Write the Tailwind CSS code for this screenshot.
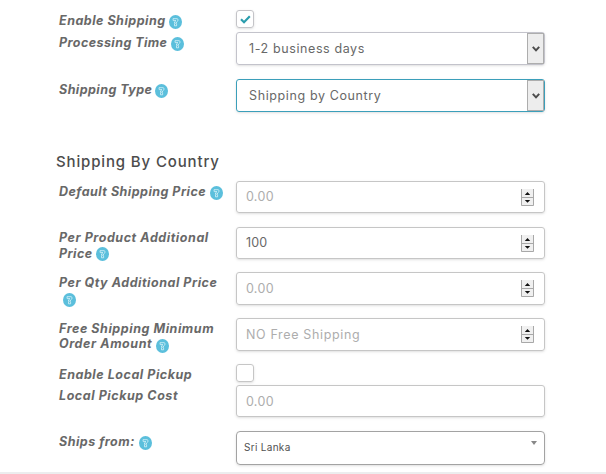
<!DOCTYPE html>
<html lang="en">
<head>
    <meta charset="UTF-8">
    <meta name="viewport" content="width=device-width, initial-scale=1.0">
    <title>Shipping</title>
    <script src="https://cdn.jsdelivr.net/npm/@tailwindcss/browser@4"></script>
</head>
<body class="bg-white font-['Inter',sans-serif] text-[12.5px] text-[#686868] overflow-hidden">
    <svg class="hidden">
        <symbol id="help" viewBox="0 0 13 14">
            <ellipse cx="6.5" cy="7" rx="6.5" ry="7" fill="#5bbfdc"/>
            <path d="M4 3.7H8.2Q9.2 3.9 9 5.2 8.8 6.4 7.5 7.1V8.2H5.5V6.9L7 5.6H4.2zM5.5 8.6v2.2h2.1V8.6" fill="none" stroke="#d8f1f8" stroke-width=".8"/>
        </symbol>
        <symbol id="spinner" viewBox="0 0 13 17">
            <path d="M0 0h13v17H0z" fill="#f0f0f0"/>
            <path d="M.5 0v16.5h12V0M0 8.5h13" fill="none" stroke="#a8a8a8"/>
            <path d="M6.5 3 9.2 6H3.8zM6.5 13.8 9.2 11H3.8z" fill="#111"/>
        </symbol>
        <symbol id="chevron" viewBox="0 0 8 6">
            <path d="M.8 .8 4 4.3 7.2 .8" fill="none" stroke="#4c4c4c" stroke-width="2"/>
        </symbol>
    </svg>

    <form class="h-[474px] flex flex-col pt-[10px]">
        <div class="h-[22px] flex pl-[59px]">
            <div class="w-[177px] pt-[3px] font-bold italic leading-4 whitespace-nowrap"><span class="tracking-[0.5px]">Enable Shipping</span><svg class="inline-block align-top w-[13px] h-[14px] ml-[3px] mt-[2px]"><use href="#help"/></svg></div>
            <div class="w-[18px] h-[18px] border border-[#c4c4c8] rounded-[3px] shadow-sm flex items-center justify-center">
                <svg class="w-[11px] h-[9px]" viewBox="0 0 11 9"><path d="M1 4.3 4 7.2 9.8 1.3" fill="none" stroke="#2a9dad" stroke-width="2.2"/></svg>
            </div>
        </div>
        <div class="h-[47px] flex pl-[59px]">
            <div class="w-[177px] pt-[3px] font-bold italic leading-4 whitespace-nowrap"><span class="tracking-[0.44px]">Processing Time</span><svg class="inline-block align-top w-[13px] h-[14px] ml-1 mt-[2px]"><use href="#help"/></svg></div>
            <div class="w-[309px] h-[33px] border border-[#c3c3cb] rounded-[3px] shadow-sm flex items-center justify-between pl-3">
                <span class="pt-[2px] tracking-[0.6px]">1-2 business days</span>
                <span class="w-[17px] h-full border border-[#adadad] bg-[#ededed] flex items-center justify-center"><svg class="w-2 h-1.5"><use href="#chevron"/></svg></span>
            </div>
        </div>
        <div class="h-[69px] flex pl-[59px]">
            <div class="w-[177px] pt-[3px] font-bold italic leading-4 whitespace-nowrap"><span class="tracking-[0.45px]">Shipping Type</span><svg class="inline-block align-top w-[13px] h-[14px] ml-[3px] mt-[2px]"><use href="#help"/></svg></div>
            <div class="w-[309px] h-[33px] border border-[#3b9fba] rounded-[3px] shadow-sm flex items-center justify-between pl-3">
                <span class="pt-[2px] tracking-[0.62px]">Shipping by Country</span>
                <span class="w-[17px] h-full border border-[#adadad] bg-[#ededed] flex items-center justify-center"><svg class="w-2 h-1.5"><use href="#chevron"/></svg></span>
            </div>
        </div>

        <h3 class="h-[33px] pl-[56px] pt-1 text-[15px] leading-5 font-medium text-[#4c4c4c]"><span class="tracking-[0.86px]">Shipping By Country</span></h3>

        <div class="h-[46px] flex pl-[59px]">
            <div class="w-[177px] pt-[3px] font-bold italic leading-4 whitespace-nowrap"><span class="tracking-[0.48px]">Default Shipping Price</span><svg class="inline-block align-top w-[13px] h-[14px] ml-1 mt-[2px]"><use href="#help"/></svg></div>
            <div class="w-[309px] h-[32px] border border-[#c6c6c6] rounded-[3px] shadow-sm flex items-center justify-between pl-[9px] pr-[10px]">
                <span class="pt-px tracking-[0.3px] text-[#adadad]">0.00</span>
                <svg class="w-[13px] h-[17px]"><use href="#spinner"/></svg>
            </div>
        </div>
        <div class="h-[45px] flex pl-[59px]">
            <div class="w-[177px] pt-[3px] font-bold italic leading-4 whitespace-nowrap"><span class="tracking-[0.56px]">Per Product Additional</span><br><span class="tracking-[0.4px]">Price</span><svg class="inline-block align-top w-[13px] h-[14px] ml-1 mt-[1px]"><use href="#help"/></svg></div>
            <div class="w-[309px] h-[32px] border border-[#c6c6c6] rounded-[3px] shadow-sm flex items-center justify-between pl-[9px] pr-[10px]">
                <span class="pt-px tracking-[0.2px]">100</span>
                <svg class="w-[13px] h-[17px]"><use href="#spinner"/></svg>
            </div>
        </div>
        <div class="h-[46px] flex pl-[59px]">
            <div class="w-[177px] pt-[3px] font-bold italic leading-4 whitespace-nowrap"><span class="tracking-[0.53px]">Per Qty Additional Price</span><br><svg class="inline-block align-top w-[13px] h-[14px] ml-1 mt-[2px]"><use href="#help"/></svg></div>
            <div class="w-[309px] h-[33px] border border-[#c6c6c6] rounded-[3px] shadow-sm flex items-center justify-between pl-[9px] pr-[10px]">
                <span class="pt-[2px] tracking-[0.3px] text-[#adadad]">0.00</span>
                <svg class="w-[13px] h-[17px]"><use href="#spinner"/></svg>
            </div>
        </div>
        <div class="h-[46px] flex pl-[59px]">
            <div class="w-[177px] pt-[3px] font-bold italic leading-[15px] whitespace-nowrap"><span class="tracking-[0.55px]">Free Shipping Minimum</span><br><span class="tracking-[0.58px]">Order Amount</span><svg class="inline-block align-top w-[13px] h-[14px] ml-1 mt-[3px]"><use href="#help"/></svg></div>
            <div class="w-[309px] h-[33px] border border-[#c6c6c6] rounded-[3px] shadow-sm flex items-center justify-between pl-[9px] pr-[10px]">
                <span class="pt-[2px] tracking-[0.65px] text-[#adadad]">NO Free Shipping</span>
                <svg class="w-[13px] h-[17px]"><use href="#spinner"/></svg>
            </div>
        </div>
        <div class="h-[21px] flex pl-[59px]">
            <div class="w-[177px] pt-[3px] font-bold italic leading-4 whitespace-nowrap"><span class="tracking-[0.54px]">Enable Local Pickup</span></div>
            <div class="w-[18px] h-[18px] border border-[#c6c6c6] rounded-[3px] shadow-sm"></div>
        </div>
        <div class="h-[46px] flex pl-[59px]">
            <div class="w-[177px] pt-[3px] font-bold italic leading-4 whitespace-nowrap"><span class="tracking-[0.56px]">Local Pickup Cost</span></div>
            <div class="w-[309px] h-[32px] border border-[#c6c6c6] rounded-[3px] shadow-sm flex items-center pl-[9px]">
                <span class="pt-[2px] tracking-[0.3px] text-[#adadad]">0.00</span>
            </div>
        </div>
        <div class="h-[41px] flex pl-[59px]">
            <div class="w-[177px] pt-[3px] font-bold italic leading-4 whitespace-nowrap"><span class="tracking-[0.5px]">Ships from:</span><svg class="inline-block align-top w-[13px] h-[14px] ml-1 mt-[2px]"><use href="#help"/></svg></div>
            <div class="w-[309px] h-[34px] border border-[#a3a3a3] rounded shadow-sm flex justify-between pl-[7px] pr-[7px]">
                <span class="tracking-[0.3px] text-[10px] leading-[30px] text-[#505050]">Sri Lanka</span>
                <svg class="w-[6px] h-[4px] mt-[9px]" viewBox="0 0 6 4"><path d="M0 0h6L3 4z" fill="#888"/></svg>
            </div>
        </div>
        <div class="h-[2px] bg-[#ecedee]"></div>
    </form>
</body>
</html>
